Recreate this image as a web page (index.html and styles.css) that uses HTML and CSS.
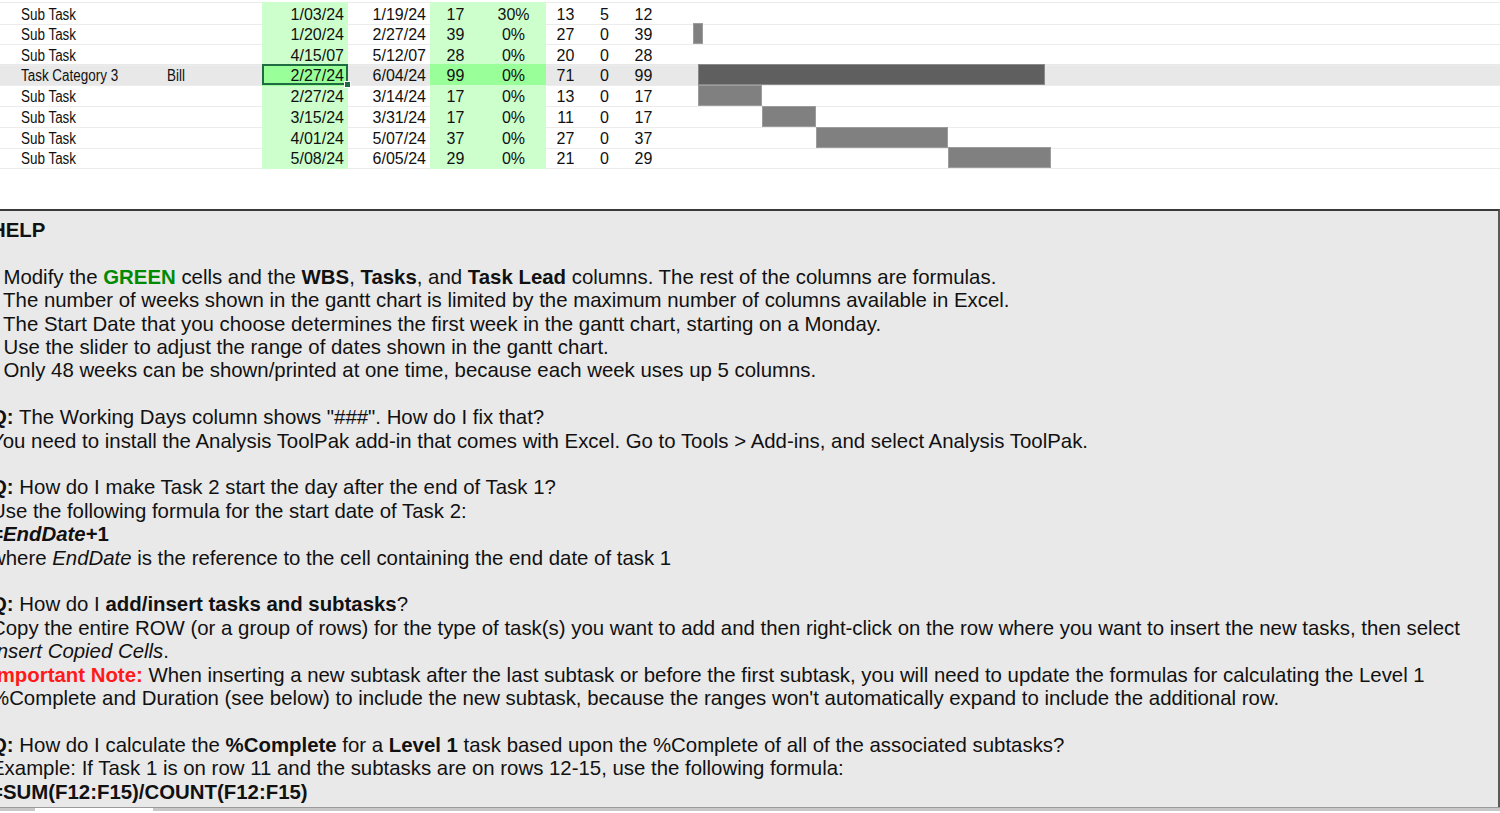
FILE: index.html
```html
<!DOCTYPE html>
<html lang="en">
<head>
    <meta charset="UTF-8">
    <meta name="viewport" content="width=device-width, initial-scale=1.0">
    <title>Gantt Chart - Help</title>
    <link rel="stylesheet" href="styles.css">
</head>
<body>
    <div class="sheet">
        <div class="row">
            <div class="cell name"><span>Sub Task</span></div>
            <div class="cell lead"></div>
            <div class="cell date green">1/03/24</div>
            <div class="cell date">1/19/24</div>
            <div class="cell num green">17</div>
            <div class="cell num green">30%</div>
            <div class="cell num">13</div>
            <div class="cell num">5</div>
            <div class="cell num">12</div>
            <div class="cell gantt"></div>
        </div>
        <div class="row">
            <div class="cell name"><span>Sub Task</span></div>
            <div class="cell lead"></div>
            <div class="cell date green">1/20/24</div>
            <div class="cell date">2/27/24</div>
            <div class="cell num green">39</div>
            <div class="cell num green">0%</div>
            <div class="cell num">27</div>
            <div class="cell num">0</div>
            <div class="cell num">39</div>
            <div class="cell gantt"><span class="bar" style="margin-left:30px;width:10px"></span></div>
        </div>
        <div class="row">
            <div class="cell name"><span>Sub Task</span></div>
            <div class="cell lead"></div>
            <div class="cell date green">4/15/07</div>
            <div class="cell date">5/12/07</div>
            <div class="cell num green">28</div>
            <div class="cell num green">0%</div>
            <div class="cell num">20</div>
            <div class="cell num">0</div>
            <div class="cell num">28</div>
            <div class="cell gantt"></div>
        </div>
        <div class="row category">
            <div class="cell name"><span>Task Category 3</span></div>
            <div class="cell lead"><span>Bill</span></div>
            <div class="cell date green selected">2/27/24<span class="fill-handle"></span></div>
            <div class="cell date">6/04/24</div>
            <div class="cell num green">99</div>
            <div class="cell num green">0%</div>
            <div class="cell num">71</div>
            <div class="cell num">0</div>
            <div class="cell num">99</div>
            <div class="cell gantt"><span class="bar bar-cat" style="margin-left:35px;width:347px"></span></div>
        </div>
        <div class="row">
            <div class="cell name"><span>Sub Task</span></div>
            <div class="cell lead"></div>
            <div class="cell date green">2/27/24</div>
            <div class="cell date">3/14/24</div>
            <div class="cell num green">17</div>
            <div class="cell num green">0%</div>
            <div class="cell num">13</div>
            <div class="cell num">0</div>
            <div class="cell num">17</div>
            <div class="cell gantt"><span class="bar" style="margin-left:35px;width:64px"></span></div>
        </div>
        <div class="row">
            <div class="cell name"><span>Sub Task</span></div>
            <div class="cell lead"></div>
            <div class="cell date green">3/15/24</div>
            <div class="cell date">3/31/24</div>
            <div class="cell num green">17</div>
            <div class="cell num green">0%</div>
            <div class="cell num">11</div>
            <div class="cell num">0</div>
            <div class="cell num">17</div>
            <div class="cell gantt"><span class="bar" style="margin-left:99px;width:54px"></span></div>
        </div>
        <div class="row">
            <div class="cell name"><span>Sub Task</span></div>
            <div class="cell lead"></div>
            <div class="cell date green">4/01/24</div>
            <div class="cell date">5/07/24</div>
            <div class="cell num green">37</div>
            <div class="cell num green">0%</div>
            <div class="cell num">27</div>
            <div class="cell num">0</div>
            <div class="cell num">37</div>
            <div class="cell gantt"><span class="bar" style="margin-left:153px;width:132px"></span></div>
        </div>
        <div class="row">
            <div class="cell name"><span>Sub Task</span></div>
            <div class="cell lead"></div>
            <div class="cell date green">5/08/24</div>
            <div class="cell date">6/05/24</div>
            <div class="cell num green">29</div>
            <div class="cell num green">0%</div>
            <div class="cell num">21</div>
            <div class="cell num">0</div>
            <div class="cell num">29</div>
            <div class="cell gantt"><span class="bar" style="margin-left:285px;width:103px"></span></div>
        </div>
    </div>

    <div class="help">
        <h2 class="help-title">HELP</h2>

        <div class="help-group">
            <p>- Modify the <b class="text-green">GREEN</b> cells and the <b>WBS</b>, <b>Tasks</b>, and <b>Task Lead</b> columns. The rest of the columns are formulas.</p>
            <p>- The number of weeks shown in the gantt chart is limited by the maximum number of columns available in Excel.</p>
            <p>- The Start Date that you choose determines the first week in the gantt chart, starting on a Monday.</p>
            <p>- Use the slider to adjust the range of dates shown in the gantt chart.</p>
            <p>- Only 48 weeks can be shown/printed at one time, because each week uses up 5 columns.</p>
        </div>

        <div class="help-group">
            <p><b>Q:</b> The Working Days column shows "###". How do I fix that?</p>
            <p>You need to install the Analysis ToolPak add-in that comes with Excel. Go to Tools &gt; Add-ins, and select Analysis ToolPak.</p>
        </div>

        <div class="help-group">
            <p><b>Q:</b> How do I make Task 2 start the day after the end of Task 1?</p>
            <p>Use the following formula for the start date of Task 2:</p>
            <p><b><i>=EndDate</i>+1</b></p>
            <p>where <i>EndDate</i> is the reference to the cell containing the end date of task 1</p>
        </div>

        <div class="help-group">
            <p><b>Q:</b> How do I <b>add/insert tasks and subtasks</b>?</p>
            <p>Copy the entire ROW (or a group of rows) for the type of task(s) you want to add and then right-click on the row where you want to insert the new tasks, then select <br><i>Insert Copied Cells</i>.</p>
            <p><b class="text-red">Important Note:</b> When inserting a new subtask after the last subtask or before the first subtask, you will need to update the formulas for calculating the Level 1 <br>%Complete and Duration (see below) to include the new subtask, because the ranges won't automatically expand to include the additional row.</p>
        </div>

        <div class="help-group">
            <p><b>Q:</b> How do I calculate the <b>%Complete</b> for a <b>Level 1</b> task based upon the %Complete of all of the associated subtasks?</p>
            <p>Example: If Task 1 is on row 11 and the subtasks are on rows 12-15, use the following formula:</p>
            <p><b>=SUM(F12:F15)/COUNT(F12:F15)</b></p>
        </div>
    </div>

    <div class="tabs">
        <span class="tab"></span>
    </div>
</body>
</html>
```

FILE: styles.css
```css
html, body {
    margin: 0;
    padding: 0;
    height: 813px;
    overflow: hidden;
}
body {
    background-color: #ffffff;
    color: #111111;
    font-family: "Liberation Sans", Arial, sans-serif;
}
.sheet {
    padding-top: 2px;
}
.row {
    display: grid;
    grid-template-columns: 160px 102px 86px 82px 51px 65px 39px 39px 39px 1fr;
    height: 20.75px;
}
.row:first-child .cell {
    border-top: 1px solid #ececec;
}
.cell {
    box-sizing: border-box;
    border-bottom: 1px solid #ececec;
    padding-top: 3px;
    font-size: 16px;
    line-height: 18px;
    white-space: nowrap;
}
/* narrow text for the task and lead columns */
.name span, .lead span {
    display: inline-block;
    transform: scaleX(0.84);
    transform-origin: left center;
}
.name {
    padding-left: 21px;
}
.lead {
    padding-left: 7px;
}
.date {
    text-align: right;
    padding-right: 4px;
}
.num {
    text-align: center;
}
.green {
    background-color: #ccffcc;
    border-bottom-color: #ccffcc;
}
.row:first-child .green {
    border-top-color: #ccffcc;
}
.category {
    background-color: #e8e8e8;
}
.category .green {
    background-color: #99ff99;
    border-bottom-color: #99ff99;
}
.selected {
    position: relative;
    box-shadow: inset 0 0 0 2px #1f6b42;
}
.fill-handle {
    position: absolute;
    right: -3px;
    bottom: -3px;
    width: 5px;
    height: 5px;
    background-color: #1f6b42;
    border: 1px solid #ffffff;
}
.gantt {
    display: flex;
    align-items: stretch;
    padding-top: 0;
}
.bar {
    box-sizing: border-box;
    background-color: #808080;
    border: 1px solid #9c9c9c;
}
.bar-cat {
    background-color: #5f5f5f;
    border-color: #8a8a8a;
}

/* help text box */
.help {
    margin: 41px 0 0 -9px;
    height: 598px;
    box-sizing: border-box;
    padding-top: 8px;
    background-color: #e9e9e9;
    border-top: 2px solid #3a3a3a;
    border-right: 2px solid #5a5a5a;
    font-size: 20.4px;
    line-height: 23.4px;
    overflow: hidden;
}
.help-title {
    margin: 0 0 23.4px;
    font-size: 20.4px;
    line-height: 23.4px;
}
.help-group {
    margin-bottom: 23.4px;
}
.help p {
    margin: 0;
}
.text-green {
    color: #008a00;
}
.text-red {
    color: #ff1a1a;
}
.tabs {
    display: flex;
    height: 3px;
    background-color: #c8c8c8;
    border-top: 1px solid #9a9a9a;
}
.tab {
    margin-left: 35px;
    width: 118px;
    background-color: #ffffff;
}
```
